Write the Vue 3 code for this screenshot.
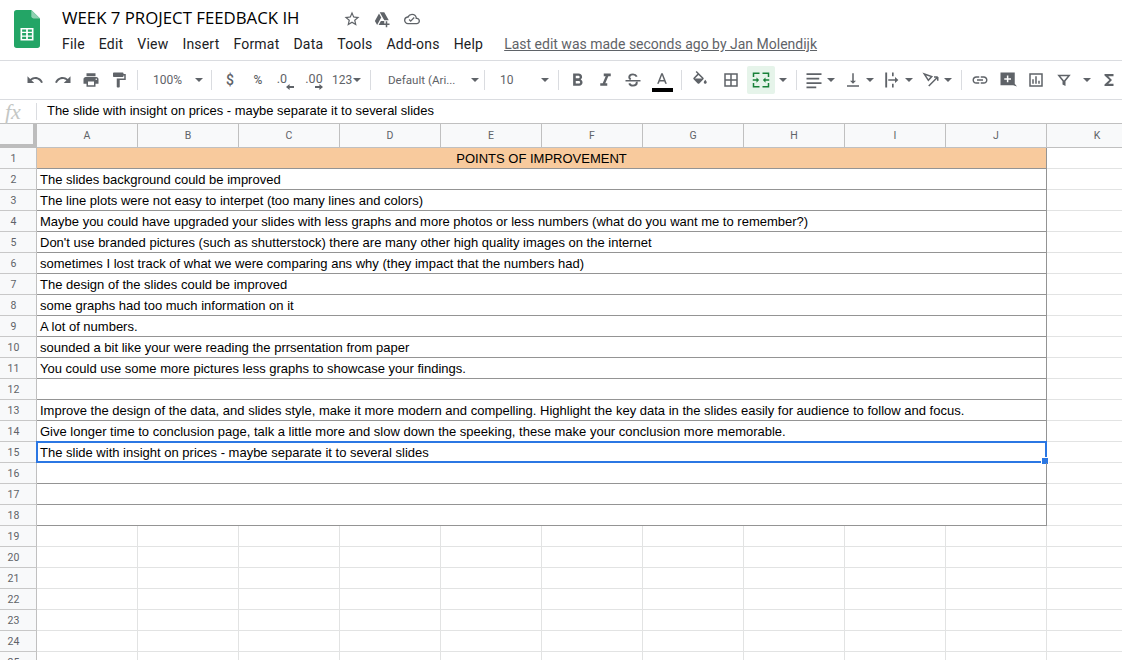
<template>
  <div class="app">
    <header class="topbar">
      <svg class="logo" width="26" height="38" viewBox="0 0 24 36" preserveAspectRatio="none">
        <path d="M2.500 0H16l8 8v25.500a2.500 2.500 0 0 1-2.500 2.500h-19A2.500 2.500 0 0 1 0 33.500v-31A2.500 2.500 0 0 1 2.500 0z" fill="#23a566" />
        <path d="M16 0l8 8h-6a2 2 0 0 1-2-2z" fill="#8ed1b1" />
        <path d="M6 17h12v12H6zM7.500 18.500v2.200h3.700v-2.200zm5.300 0v2.200h3.700v-2.200zM7.500 21.900v2.200h3.700v-2.200zm5.300 0v2.200h3.700v-2.200zM7.500 25.300v2.200h3.700v-2.200zm5.300 0v2.200h3.700v-2.200z" fill="#fff" fill-rule="evenodd" />
      </svg>
      <div class="doc">
        <div class="title-row">
          <span class="title">WEEK 7 PROJECT FEEDBACK IH</span>
          <svg class="star" width="18" height="18" viewBox="0 0 24 24"><path d="M22 9.240l-7.190-.62L12 2 9.190 8.630 2 9.240l5.460 4.730L5.820 21 12 17.270 18.180 21l-1.630-7.030L22 9.240zM12 15.400l-3.760 2.270 1-4.280-3.320-2.880 4.380-.38L12 6.100l1.710 4.040 4.380.38-3.320 2.880 1 4.280L12 15.400z" fill="#5f6368" /></svg>
          <svg class="drive" width="18" height="18" viewBox="0 0 24 24"><path d="M9 3h6l6 10.500h-6zM8 4.500l3 5.500-5.500 10L2.500 14.500zM7.500 20l3-5.500h4.500V20z" fill="#5f6368" /><path d="M19 15v3h3v2h-3v3h-2v-3h-3v-2h3v-3z" fill="#5f6368" /></svg>
          <svg class="cloud" width="16" height="16" viewBox="0 0 24 24"><path d="M19.350 10.040A7.490 7.490 0 0 0 12 4a7.490 7.490 0 0 0-6.650 4.040A5.990 5.990 0 0 0 0 14c0 3.310 2.690 6 6 6h13c2.760 0 5-2.240 5-5 0-2.640-2.050-4.780-4.650-4.960zM19 18H6c-2.210 0-4-1.790-4-4s1.790-4 4-4h.71A5.500 5.500 0 0 1 12 6a5.500 5.500 0 0 1 5.500 5.500v.5H19a3 3 0 0 1 0 6zm-9-1.500l-3-3 1.400-1.400 1.600 1.590 4.600-4.590 1.400 1.400z" fill="#5f6368" /></svg>
        </div>
        <nav class="menu">
          <span v-for="m in menus" :key="m">{{ m }}</span>
          <a class="last-edit">Last edit was made seconds ago by Jan Molendijk</a>
        </nav>
      </div>
    </header>

    <div class="toolbar">
      <template v-for="(item, i) in tools" :key="i">
        <span v-if="item.sep" class="sep"></span>
        <span v-else-if="item.drop" class="drop" :class="item.drop">
          <span class="drop-label">{{ item.text }}</span>
          <i class="caret"></i>
        </span>
        <span v-else-if="item.text" class="txt" :class="item.cls">{{ item.text }}</span>
        <span v-else-if="item.caret" class="lone-caret" :class="item.cls"><i class="caret"></i></span>
        <span v-else class="tool" :class="[item.cls, { split: item.split }]">
          <svg width="18" height="18" viewBox="0 0 24 24" :fill="item.stroke ? 'none' : '#5f6368'" :stroke="item.stroke ? '#5f6368' : 'none'" :stroke-width="item.stroke ? 2 : 0">
            <path v-if="item.d" :d="item.d" />
            <path v-if="item.d2" :d="item.d2" fill="none" stroke="#5f6368" stroke-width="2.600" />
          </svg>
          <i v-if="item.split" class="caret"></i>
        </span>
      </template>
    </div>

    <div class="formula">
      <span class="fx">fx</span>
      <span class="fx-sep"></span>
      <span class="fx-text">The slide with insight on prices - maybe separate it to several slides</span>
    </div>

    <div class="sheet">
      <div class="corner"></div>
      <div v-for="c in columns" :key="c" class="col-head">{{ c }}</div>
      <template v-for="r in 25" :key="r">
        <div class="row-head">{{ r }}</div>
        <template v-if="r <= 18">
          <div class="merged" :class="{ head: r === 1, active: r === 15 }">
            {{ rows[r - 1] }}
            <i v-if="r === 15" class="handle"></i>
          </div>
          <div class="cell"></div>
        </template>
        <template v-else>
          <div v-for="c in columns" :key="c" class="cell"></div>
        </template>
      </template>
    </div>
  </div>
</template>

<script setup>
const menus = ['File', 'Edit', 'View', 'Insert', 'Format', 'Data', 'Tools', 'Add-ons', 'Help']
const columns = ['A', 'B', 'C', 'D', 'E', 'F', 'G', 'H', 'I', 'J', 'K']

const rows = [
  'POINTS OF IMPROVEMENT',
  'The slides background could be improved',
  'The line plots were not easy to interpet (too many lines and colors)',
  'Maybe you could have upgraded your slides with less graphs and more photos or less numbers (what do you want me to remember?)',
  "Don't use branded pictures (such as shutterstock) there are many other high quality images on the internet",
  'sometimes I lost track of what we were comparing ans why (they impact that the numbers had)',
  'The design of the slides could be improved',
  'some graphs had too much information on it',
  'A lot of numbers.',
  'sounded a bit like your were reading the prrsentation from paper',
  'You could use some more pictures less graphs to showcase your findings.',
  '',
  'Improve the design of the data, and slides style, make it more modern and compelling. Highlight the key data in the slides easily for audience to follow and focus.',
  'Give longer time to conclusion page, talk a little more and slow down the speeking, these make your conclusion more memorable.',
  'The slide with insight on prices - maybe separate it to several slides',
  '',
  '',
  ''
]

const tools = [
  { d: 'M12.500 8c-2.650 0-5.050.99-6.900 2.600L2 7v9h9l-3.620-3.620c1.390-1.160 3.160-1.880 5.120-1.880 3.540 0 6.550 2.310 7.600 5.500l2.370-.78C21.080 11.030 17.150 8 12.500 8z' },
  { d: 'M18.400 10.600C16.550 8.990 14.150 8 11.500 8c-4.650 0-8.580 3.030-9.960 7.220L3.900 16c1.050-3.190 4.050-5.500 7.600-5.500 1.950 0 3.730.72 5.120 1.880L13 16h9V7l-3.600 3.600z' },
  { d: 'M19 8H5c-1.660 0-3 1.340-3 3v6h4v4h12v-4h4v-6c0-1.660-1.340-3-3-3zm-3 11H8v-5h8v5zm3-7c-.55 0-1-.45-1-1s.45-1 1-1 1 .45 1 1-.45 1-1 1zm-1-9H6v4h12V3z' },
  { d: 'M18 4V3c0-.55-.45-1-1-1H5c-.55 0-1 .45-1 1v4c0 .55.45 1 1 1h12c.55 0 1-.45 1-1V6h1v4H9v11c0 .55.45 1 1 1h2c.55 0 1-.45 1-1v-9h8V4h-3z' },
  { sep: true },
  { drop: 'zoom', text: '100%' },
  { sep: true },
  { text: '$', cls: 'fmt money' },
  { text: '%', cls: 'fmt pct' },
  { text: '.0', cls: 'fmt dec less' },
  { text: '.00', cls: 'fmt dec more' },
  { drop: 'more', text: '123' },
  { sep: true },
  { drop: 'font', text: 'Default (Ari...' },
  { sep: true },
  { drop: 'size', text: '10' },
  { sep: true },
  { d: 'M15.600 10.790c.97-.67 1.650-1.770 1.650-2.790 0-2.260-1.750-4-4-4H7v14h7.040c2.090 0 3.710-1.700 3.710-3.790 0-1.520-.86-2.820-2.150-3.420zM10 6.500h3c.83 0 1.500.67 1.500 1.500s-.67 1.500-1.500 1.500h-3v-3zm3.500 9H10v-3h3.500c.83 0 1.500.67 1.500 1.500s-.67 1.500-1.500 1.500z', cls: 'large' },
  { d: 'M10 4v3h2.210l-3.420 8H6v3h8v-3h-2.210l3.420-8H18V4z', cls: 'large' },
  { d: 'M2 12h20v2H2z', d2: 'M17 7.500C16 5.500 14.300 4.500 12 4.500c-2.900 0-5 1.500-5 3.800 0 1.300.7 2.200 2 2.900M7 16.500c.8 2 2.600 3 5 3 3 0 5-1.500 5-3.700 0-.6-.1-1.100-.4-1.600' },
  { d: 'M11 3L5.500 17h2.250l1.120-3h6.250l1.120 3h2.250L13 3h-2zm-1.380 9L12 5.670 14.380 12H9.620z', cls: 'color' },
  { sep: true },
  { d: 'M16.560 8.940L7.620 0 6.210 1.410l2.380 2.380-5.150 5.150c-.59.59-.59 1.540 0 2.120l5.500 5.500c.29.29.68.44 1.060.44s.77-.15 1.060-.44l5.500-5.500c.59-.58.59-1.530 0-2.120zM5.210 10L10 5.210 14.790 10H5.210zM19 11.500s-2 2.170-2 3.500c0 1.100.9 2 2 2s2-.9 2-2c0-1.330-2-3.500-2-3.500z', cls: 'fill' },
  { d: 'M3 3v18h18V3H3zm8 16H5v-6h6v6zm0-8H5V5h6v6zm8 8h-6v-6h6v6zm0-8h-6V5h6v6z', cls: 'borders' },
  { d: 'M1 2h9v2H3v4H1zM23 2h-9v2h7v4h2zM1 22h9v-2H3v-4H1zM23 22h-9v-2h7v-4h2zM1 11h5V8.500L9.500 12 6 15.500V13H1zM23 11h-5V8.500L14.500 12l3.500 3.500V13h5z', cls: 'merge' },
  { caret: true },
  { sep: true },
  { d: 'M2 3h20v2.200H2zM2 9h17v2.200H2zM2 15h20v2.200H2zM2 20.800h13V23H2z', split: true },
  { d: 'M16 13h-3V3h-2v10H8l4 4 4-4zM4 19v2h16v-2H4z', split: true },
  { d: 'M3 2h2.500v20H3zM12 2h2.200v5H12zM12 17h2.200v5H12zM7 11h9V8l4.500 4-4.500 4v-3H7z', split: true },
  { d: 'M3 4l10 3.500-4.500 5zM9 20L21 8M21 8v5M21 8h-5', stroke: true, split: true },
  { sep: true },
  { d: 'M3.900 12c0-1.710 1.390-3.100 3.100-3.100h4V7H7c-2.760 0-5 2.240-5 5s2.240 5 5 5h4v-1.900H7c-1.710 0-3.100-1.390-3.100-3.100zM8 13h8v-2H8v2zm9-6h-4v1.900h4c1.710 0 3.100 1.390 3.100 3.100s-1.390 3.100-3.100 3.100h-4V17h4c2.760 0 5-2.240 5-5s-2.240-5-5-5z' },
  { d: 'M2 2h19v15l3 3.500-5-1.500H2zM10.500 6v3.500H7v2h3.500V15h2v-3.500H16v-2h-3.500V6z', cls: 'comment' },
  { d: 'M3 3h18v18H3zM5 5v14h14V5zM7 11h2v6H7zM11 7h2v10h-2zM15 13h2v4h-2z' },
  { d: 'M3 5h18l-7 8.500V20l-4-2v-4.500zM7.200 7l4.800 5.800L16.800 7z', cls: 'funnel' },
  { caret: true, cls: 'funnel-caret' },
  { d: 'M18 4H6v2l6.500 6L6 18v2h12v-3h-7l5-5-5-5h7z', cls: 'sigma' }
]
</script>

<style scoped>
.app {
  width: 1122px;
  height: 660px;
  overflow: hidden;
  background: #fff;
  font-family: "Liberation Sans", Arial, sans-serif;
  color: #000;
}

.topbar {
  height: 60px;
  display: flex;
  box-sizing: border-box;
  padding: 10px 0 0 14px;
}

.logo {
  flex: none;
  margin-right: 22px;
}

.doc {
  margin-top: -5px;
}

.title-row {
  height: 24px;
  display: flex;
  align-items: center;
}

.title {
  font-family: "Open Sans", sans-serif;
  font-size: 16.800px;
  color: #000;
  width: 281px;
  white-space: nowrap;
}

.star,
.drive,
.cloud {
  flex: none;
  margin-top: 4px;
  margin-right: 12px;
}

.cloud {
  margin-left: 1px;
}

.menu {
  display: flex;
  gap: 14px;
  margin-top: 5px;
  font-family: Roboto, sans-serif;
  font-size: 14px;
  line-height: 20px;
  letter-spacing: 0.2px;
  color: #202124;
  white-space: nowrap;
}

.last-edit {
  margin-left: 7px;
  color: #5f6368;
  letter-spacing: 0;
  text-decoration: underline;
}

.toolbar {
  height: 40px;
  box-sizing: border-box;
  display: flex;
  align-items: center;
  padding-left: 21px;
  border-top: 1px solid #dadce0;
  border-bottom: 1px solid #dadce0;
  font-family: Roboto, sans-serif;
  font-size: 12px;
  color: #5f6368;
}

.sep {
  flex: none;
  width: 1px;
  height: 20px;
  margin: 0 4px;
  background: #dadce0;
}

.tool {
  flex: none;
  width: 28px;
  height: 28px;
  display: flex;
  align-items: center;
  justify-content: center;
  position: relative;
}

.tool.split {
  width: 39px;
  justify-content: flex-start;
  gap: 4px;
  padding-left: 4px;
  box-sizing: border-box;
}

.tool.large svg {
  width: 21px;
  height: 21px;
}

.tool.color {
  margin: 0 1px;
}

.tool.color::after {
  content: "";
  position: absolute;
  left: 4px;
  right: 3px;
  bottom: 2px;
  height: 4px;
  background: #000;
}

.tool.fill {
  margin-right: 3px;
}

.tool.borders {
  margin-right: 2px;
}

.tool.merge {
  background: #e6f4ea;
  border-radius: 2px;
}

.tool.merge path {
  fill: #188038;
}

.tool.sigma {
  margin-left: -1px;
}

.caret {
  flex: none;
  width: 0;
  height: 0;
  border-left: 4px solid transparent;
  border-right: 4px solid transparent;
  border-top: 4px solid #5f6368;
}

.lone-caret {
  flex: none;
  width: 17px;
  display: flex;
  justify-content: center;
  padding-right: 1px;
  box-sizing: border-box;
}

.lone-caret.funnel-caret {
  width: 18px;
}

.drop {
  flex: none;
  display: flex;
  align-items: center;
  justify-content: space-between;
  box-sizing: border-box;
  white-space: nowrap;
}

.drop.zoom {
  width: 65px;
  padding: 0 4px 0 11px;
}

.drop.more {
  width: 38px;
  padding: 0 5px 0 4px;
}

.drop.font {
  width: 105px;
  padding: 0 1px 0 13px;
  font-size: 11.600px;
}

.drop.size {
  width: 65px;
  padding: 0 5px 0 11px;
}

.txt {
  flex: none;
  text-align: center;
}

.fmt {
  width: 28px;
  height: 28px;
  line-height: 28px;
  position: relative;
}

.money {
  font-size: 14px;
  font-weight: 500;
}

.pct {
  font-size: 12px;
  font-weight: 500;
}

.dec {
  font-size: 12.500px;
  line-height: 26px;
}

.dec.less {
  box-sizing: border-box;
  padding-right: 8px;
}

.dec.less::after,
.dec.more::after {
  content: "";
  position: absolute;
  bottom: 4px;
  width: 8px;
  height: 6px;
  background: #5f6368;
}

.dec.less::after {
  left: 14px;
  clip-path: polygon(0 50%, 45% 0, 45% 33%, 100% 33%, 100% 67%, 45% 67%, 45% 100%);
}

.dec.more::after {
  left: 15px;
  clip-path: polygon(100% 50%, 55% 0, 55% 33%, 0 33%, 0 67%, 55% 67%, 55% 100%);
}

.formula {
  height: 24px;
  box-sizing: border-box;
  display: flex;
  align-items: center;
  border-bottom: 1px solid #c0c0c0;
}

.fx {
  width: 36px;
  padding-left: 5px;
  box-sizing: border-box;
  font-family: "Liberation Serif", serif;
  font-style: italic;
  font-size: 22px;
  line-height: 23px;
  color: #c4c7c5;
}

.fx-sep {
  width: 1px;
  height: 17px;
  background: #dadce0;
}

.fx-text {
  margin: -2px 0 0 10px;
  font-size: 12.950px;
  color: #000;
  white-space: nowrap;
}

.sheet {
  display: grid;
  grid-template-columns: 37px repeat(10, 101px) 101px;
  grid-template-rows: 24px;
  grid-auto-rows: 21px;
  width: 1148px;
}

.corner {
  background: #f8f9fa;
  box-sizing: border-box;
  border-right: 4px solid #bdbdbd;
  border-bottom: 4px solid #bdbdbd;
}

.col-head,
.row-head {
  display: flex;
  align-items: center;
  justify-content: center;
  box-sizing: border-box;
  background: #f8f9fa;
  font-family: Roboto, sans-serif;
  font-size: 10.500px;
  color: #5f6368;
}

.col-head {
  border-right: 1px solid #c0c0c0;
  border-bottom: 1px solid #c0c0c0;
}

.row-head {
  border-right: 1px solid #c0c0c0;
  border-bottom: 1px solid #c8c8c8;
  padding-right: 9px;
}

.merged {
  grid-column: span 10;
  box-sizing: border-box;
  padding: 1px 3px 0;
  font-size: 13px;
  line-height: 20px;
  white-space: nowrap;
  border-right: 1px solid #949494;
  border-bottom: 1px solid #949494;
  position: relative;
}

.merged.head {
  background: #f8ca9d;
  text-align: center;
}

.merged.active::before {
  content: "";
  position: absolute;
  left: -1px;
  right: -1px;
  top: -1px;
  bottom: -1px;
  border: 2px solid #2b77e3;
  pointer-events: none;
}

.handle {
  position: absolute;
  right: -3px;
  bottom: -3px;
  width: 6px;
  height: 6px;
  background: #2b77e3;
  border: 1px solid #fff;
}

.cell {
  box-sizing: border-box;
  border-right: 1px solid #e2e3e3;
  border-bottom: 1px solid #e2e3e3;
}
</style>
